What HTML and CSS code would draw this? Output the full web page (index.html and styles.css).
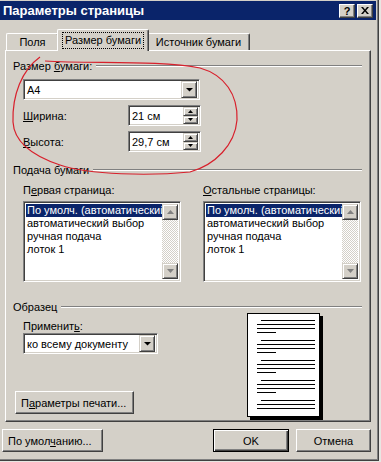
FILE: index.html
```html
<!DOCTYPE html>
<html lang="ru">
<head>
    <meta charset="UTF-8">
    <meta name="viewport" content="width=device-width, initial-scale=1.0">
    <title>Параметры страницы</title>
    <link rel="stylesheet" href="styles.css">
</head>
<body>
    <div class="window">
        <div class="titlebar">
            <span class="title">Параметры страницы</span>
            <div class="caption">
                <span class="cap-btn help">?</span>
                <span class="cap-btn">
                    <svg width="8" height="7" viewBox="0 0 8 7"><path d="M0 0h2l2 2.4L6 0h2L5 3.5 8 7H6L4 4.6 2 7H0l3-3.5z" fill="#000"/></svg>
                </span>
            </div>
        </div>

        <div class="client">
            <div class="tabs">
                <div class="tab tab-fields">Поля</div>
                <div class="tab active"><span class="focus">Размер бумаги</span></div>
                <div class="tab tab-source">Источник бумаги</div>
            </div>

            <div class="panel">
                <div class="group"><span>Размер <u>б</u>умаги:</span></div>
                <div class="combo combo-size sunken">
                    <span class="value">A4</span>
                    <span class="drop raised"><svg width="7" height="4" viewBox="0 0 7 4"><path d="M0 0h7L3.5 3.6z" fill="#000"/></svg></span>
                </div>
                <div class="field-row">
                    <label><u>Ш</u>ирина:</label>
                    <div class="spin sunken">
                        <span class="value">21 см</span>
                        <span class="spin-btns">
                            <span class="raised"><svg width="5" height="3" viewBox="0 0 5 3"><path d="M2.5 0L5 3H0z" fill="#000"/></svg></span>
                            <span class="raised"><svg width="5" height="3" viewBox="0 0 5 3"><path d="M0 0h5L2.5 3z" fill="#000"/></svg></span>
                        </span>
                    </div>
                </div>
                <div class="field-row">
                    <label><u>В</u>ысота:</label>
                    <div class="spin sunken">
                        <span class="value">29,7 см</span>
                        <span class="spin-btns">
                            <span class="raised"><svg width="5" height="3" viewBox="0 0 5 3"><path d="M2.5 0L5 3H0z" fill="#000"/></svg></span>
                            <span class="raised"><svg width="5" height="3" viewBox="0 0 5 3"><path d="M0 0h5L2.5 3z" fill="#000"/></svg></span>
                        </span>
                    </div>
                </div>

                <div class="group group-feed"><span>Подача бумаги</span></div>
                <div class="feed">
                    <div class="feed-col">
                        <div class="caption-label">П<u>е</u>рвая страница:</div>
                        <div class="listbox sunken">
                            <ul>
                                <li class="sel">По умолч. (автоматический выбор)</li>
                                <li>автоматический выбор</li>
                                <li>ручная подача</li>
                                <li>лоток 1</li>
                            </ul>
                            <div class="scrollbar">
                                <span class="sb-btn raised"><svg width="7" height="4" viewBox="0 0 7 4"><path d="M3.5 0L7 4H0z" fill="#808080"/></svg></span>
                                <span class="sb-btn raised"><svg width="7" height="4" viewBox="0 0 7 4"><path d="M0 0h7L3.5 4z" fill="#808080"/></svg></span>
                            </div>
                        </div>
                    </div>
                    <div class="feed-col">
                        <div class="caption-label"><u>О</u>стальные страницы:</div>
                        <div class="listbox sunken">
                            <ul>
                                <li class="sel">По умолч. (автоматический выбор)</li>
                                <li>автоматический выбор</li>
                                <li>ручная подача</li>
                                <li>лоток 1</li>
                            </ul>
                            <div class="scrollbar">
                                <span class="sb-btn raised"><svg width="7" height="4" viewBox="0 0 7 4"><path d="M3.5 0L7 4H0z" fill="#808080"/></svg></span>
                                <span class="sb-btn raised"><svg width="7" height="4" viewBox="0 0 7 4"><path d="M0 0h7L3.5 4z" fill="#808080"/></svg></span>
                            </div>
                        </div>
                    </div>
                </div>

                <div class="group group-sample"><span>Образец</span></div>
                <div class="sample">
                    <div class="sample-left">
                        <div class="caption-label apply-label">Применит<u>ь</u>:</div>
                        <div class="combo combo-apply sunken">
                            <span class="value">ко всему документу</span>
                            <span class="drop raised"><svg width="7" height="4" viewBox="0 0 7 4"><path d="M0 0h7L3.5 3.6z" fill="#000"/></svg></span>
                        </div>
                        <button class="btn btn-print">П<u>а</u>раметры печати...</button>
                    </div>
                    <div class="page">
                        <div class="para"><i class="first"></i><i></i><i></i><i class="last"></i></div>
                        <div class="para"><i class="first"></i><i></i><i></i><i class="last"></i></div>
                        <div class="para"><i class="first"></i><i></i><i></i><i class="last"></i></div>
                        <div class="para"><i class="first"></i><i></i><i></i><i class="last"></i></div>
                        <div class="para"><i class="first"></i><i></i><i></i></div>
                    </div>
                </div>
            </div>

            <div class="footer">
                <button class="btn btn-default">По умол<u>ч</u>анию...</button>
                <button class="btn btn-ok">OK</button>
                <button class="btn btn-cancel">Отмена</button>
            </div>
        </div>

        <svg class="scribble" width="381" height="462" viewBox="0 0 381 462">
            <path d="M40 57 C22 70 12 95 13 122 C14 140 30 155 60 165 C90 175 150 176 190 172 C215 165 235 145 237 120 C238 95 225 75 200 68 C160 60 90 64 45 61" fill="none" stroke="#d8202c" stroke-width="1.2"/>
        </svg>
    </div>
</body>
</html>
```

FILE: styles.css
```css
body {
    margin: 0;
    width: 381px;
    height: 462px;
    overflow: hidden;
    background-color: #e8e6e2;
    font-family: "Liberation Sans", Arial, sans-serif;
    font-size: 11px;
    color: #000;
}
u {
    text-decoration: underline;
    text-underline-offset: 1px;
}
.window {
    position: relative;
    width: 379px;
    height: 461px;
    box-sizing: border-box;
    padding-top: 1px;
    background-color: #d4d0c8;
    border-right: 1px solid #404040;
    border-bottom: 1px solid #404040;
    box-shadow: inset -1px -1px #808080;
}

/* title bar */
.titlebar {
    height: 19px;
    margin-right: 2px;
    padding-left: 3px;
    padding-right: 3px;
    display: flex;
    align-items: center;
    justify-content: space-between;
    background-color: #0a246a;
    color: #fff;
    font-size: 13px;
    font-weight: bold;
}
.caption {
    display: flex;
    gap: 2px;
}
.cap-btn {
    width: 16px;
    height: 14px;
    box-sizing: border-box;
    display: flex;
    align-items: center;
    justify-content: center;
    background-color: #d4d0c8;
    border: 1px solid;
    border-color: #fff #404040 #404040 #fff;
    box-shadow: inset -1px -1px #808080;
    color: #000;
    font-size: 11px;
    font-weight: bold;
}

/* 3d helpers */
.raised {
    box-sizing: border-box;
    background-color: #d4d0c8;
    border: 1px solid;
    border-color: #d4d0c8 #404040 #404040 #d4d0c8;
    box-shadow: inset 1px 1px #fff, inset -1px -1px #808080;
}
.sunken {
    box-sizing: border-box;
    background-color: #fff;
    border: 1px solid;
    border-color: #808080 #fff #fff #808080;
    box-shadow: inset 1px 1px #404040, inset -1px -1px #d4d0c8;
}

.client {
    padding: 9px 0 0 5px;
}

/* tabs */
.tabs {
    display: flex;
    align-items: flex-end;
    height: 21px;
    padding-left: 1px;
}
.tab {
    height: 17px;
    box-sizing: border-box;
    padding-top: 2px;
    text-align: center;
    white-space: nowrap;
    border-top: 1px solid #fff;
    border-left: 1px solid #fff;
    border-right: 1px solid #404040;
    border-radius: 2px 2px 0 0;
    box-shadow: inset -1px 0 #808080;
}
.tab-fields {
    width: 53px;
}
.tab-source {
    width: 102px;
    border-left: none;
}
.tab.active {
    position: relative;
    z-index: 1;
    width: 92px;
    height: 22px;
    margin: 0 -1px -1px -2px;
    padding-top: 3px;
    background-color: #d4d0c8;
}
.focus {
    display: inline-block;
    padding: 1px 2px 2px;
    outline: 1px dotted #000;
}

/* tab page */
.panel {
    width: 366px;
    height: 372px;
    box-sizing: border-box;
    padding: 8px 7px 0;
    border: 1px solid;
    border-color: #fff #404040 #404040 #fff;
    box-shadow: inset -1px -1px #808080;
}
.group {
    height: 14px;
    display: flex;
    align-items: center;
    gap: 4px;
    line-height: 14px;
}
.group::after {
    content: "";
    flex: 1;
    height: 0;
    border-top: 1px solid #808080;
    border-bottom: 1px solid #fff;
    margin-right: 1px;
}
.group-feed {
    margin-top: 11px;
}
.group-sample {
    margin-top: 18px;
}

.combo {
    height: 21px;
    display: flex;
    align-items: center;
    padding: 2px;
}
.combo .value {
    flex: 1;
    padding-left: 1px;
    white-space: nowrap;
}
.drop {
    width: 16px;
    height: 17px;
    display: flex;
    align-items: center;
    justify-content: center;
}
.combo-size {
    width: 177px;
    margin: 6px 0 0 10px;
}

.field-row {
    display: flex;
    align-items: center;
    margin-top: 5px;
    padding-left: 10px;
}
.field-row label {
    width: 105px;
}
.spin {
    width: 73px;
    height: 21px;
    display: flex;
    padding: 2px;
    align-items: center;
}
.spin .value {
    flex: 1;
    padding-left: 1px;
}
.spin-btns {
    width: 15px;
    height: 17px;
    display: flex;
    flex-direction: column;
}
.spin-btns span {
    flex: 1;
    display: flex;
    align-items: center;
    justify-content: center;
}

/* paper feed lists */
.feed {
    display: flex;
    gap: 22px;
    padding-left: 10px;
}
.caption-label {
    height: 14px;
    line-height: 14px;
    margin-top: 6px;
    margin-bottom: 4px;
    white-space: nowrap;
}
.listbox {
    width: 158px;
    height: 81px;
    display: flex;
    padding: 2px;
}
.listbox ul {
    flex: 1;
    min-width: 0;
    margin: 0;
    padding: 0;
    list-style: none;
    overflow: hidden;
}
.listbox li {
    height: 13px;
    line-height: 13px;
    padding-left: 1px;
    white-space: nowrap;
}
.listbox li.sel {
    background-color: #0a246a;
    color: #fff;
}
.scrollbar {
    width: 16px;
    display: flex;
    flex-direction: column;
    justify-content: space-between;
    background: repeating-conic-gradient(#fff 0 25%, #d4d0c8 0 50%) 0 0 / 2px 2px;
}
.sb-btn {
    height: 16px;
    display: flex;
    align-items: center;
    justify-content: center;
}

/* sample */
.sample {
    display: flex;
    height: 107px;
    margin-top: -1px;
}
.sample-left {
    width: 150px;
    display: flex;
    flex-direction: column;
    align-items: flex-start;
}
.apply-label {
    margin: 6px 0 0 10px;
}
.combo-apply {
    width: 135px;
    margin-left: 10px;
}
.btn {
    height: 23px;
    box-sizing: border-box;
    padding: 0 5px;
    background-color: #d4d0c8;
    border: 1px solid;
    border-color: #fff #404040 #404040 #fff;
    box-shadow: inset -1px -1px #808080;
    font-family: inherit;
    font-size: 11px;
    color: #000;
    white-space: nowrap;
}
.btn-print {
    width: 119px;
    margin: auto 0 6px 2px;
    text-align: left;
}
.page {
    width: 73px;
    height: 104px;
    box-sizing: border-box;
    margin-left: 84px;
    padding: 6px 0 0 9px;
    overflow: hidden;
    background-color: #fff;
    border: 1px solid #000;
    box-shadow: 3px 3px 0 #000;
}
.para {
    display: flex;
    flex-direction: column;
    gap: 3px;
    margin-bottom: 7px;
}
.para i {
    display: block;
    width: 58px;
    height: 1px;
    background-color: #000;
}
.para i.first {
    width: 54px;
    margin-left: 4px;
}
.para i.last {
    width: 19px;
}

/* bottom buttons */
.footer {
    display: flex;
    margin: 7px 0 0 -3px;
}
.btn-default {
    width: 101px;
    text-align: left;
}
.btn-ok {
    width: 76px;
    margin-left: auto;
    border: 1px solid #000;
    box-shadow: inset 1px 1px #fff, inset -1px -1px #404040, inset -2px -2px #808080;
}
.btn-cancel {
    width: 75px;
    margin: 0 7px 0 7px;
}

.scribble {
    position: absolute;
    top: 0;
    left: 0;
    pointer-events: none;
}
```
